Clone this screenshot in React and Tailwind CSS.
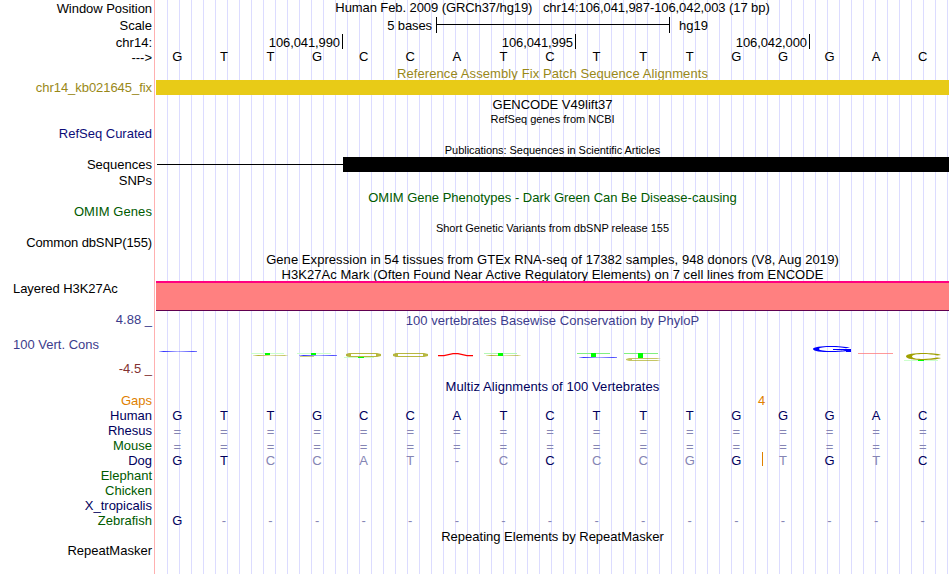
import React from "react";

const BASES = "GTTGCCATCTTTGGGAC";
const DOG = "GTCCAT-CCCCGGTGTC";

const alignments = [
  { name: "Human", seq: BASES, label: "text-[#00005c]" },
  { name: "Rhesus", seq: "=================", label: "text-[#00005c]", seqClass: "pt-px" },
  { name: "Mouse", seq: "=================", label: "text-[#005a00]", seqClass: "pt-px" },
  { name: "Dog", seq: DOG, label: "text-[#00005c]" },
  { name: "Elephant", seq: "", label: "text-[#005a00]" },
  { name: "Chicken", seq: "", label: "text-[#005a00]" },
  { name: "X_tropicalis", seq: "", label: "text-[#00005c]" },
  { name: "Zebrafish", seq: "G----------------", label: "text-[#005a00]" },
];

/* One line of the browser: label on the left, track on the right */
function Row({ label, h, labelClass = "", children }) {
  return (
    <div className={`flex ${h}`}>
      <div className={`w-[156px] shrink-0 pr-[4px] text-right ${labelClass}`}>
        {label}
      </div>
      <div className="w-[793px] shrink-0">{children}</div>
    </div>
  );
}

function Title({ className = "", children }) {
  return <p className={`text-center ${className}`}>{children}</p>;
}

function Sequence({ seq, compare, className = "" }) {
  return (
    <div className={`-ml-[2px] grid w-[792px] grid-cols-17 ${className}`}>
      {seq.split("").map((base, i) => (
        <span
          key={i}
          className={`text-center ${
            compare && base !== compare[i] ? "text-[#8585b4]" : ""
          }`}
        >
          {base}
        </span>
      ))}
    </div>
  );
}

/* Flattened base shapes of the conservation logo */
function ConservationLogo() {
  return (
    <svg width="793" height="20" viewBox="156 343 793 20" className="block">
      <defs>
        <linearGradient id="blueFade">
          <stop offset="0" stopColor="#0000ff" stopOpacity="0.2" />
          <stop offset="0.12" stopColor="#0000ff" stopOpacity="0.8" />
          <stop offset="0.5" stopColor="#0000ff" stopOpacity="0.3" />
          <stop offset="0.9" stopColor="#0000ff" stopOpacity="0.7" />
          <stop offset="1" stopColor="#0000ff" stopOpacity="0.5" />
        </linearGradient>
        <linearGradient id="oliveFade">
          <stop offset="0" stopColor="#a0a000" stopOpacity="0.2" />
          <stop offset="0.15" stopColor="#a0a000" stopOpacity="0.8" />
          <stop offset="0.5" stopColor="#a0a000" stopOpacity="0.3" />
          <stop offset="0.9" stopColor="#a0a000" stopOpacity="0.6" />
          <stop offset="1" stopColor="#a0a000" stopOpacity="0.1" />
        </linearGradient>
      </defs>

      <rect x="159" y="351" width="38" height="1" fill="url(#blueFade)" />

      <rect x="251" y="353" width="33" height="1" fill="#ccffcc" />
      <rect x="253" y="355" width="35" height="1" fill="url(#oliveFade)" />
      <rect x="265" y="353" width="5" height="2" fill="#00ff00" />

      <rect x="297" y="353" width="34" height="1" fill="#ccffcc" />
      <rect x="299" y="355" width="38" height="1" fill="url(#blueFade)" />
      <rect x="300" y="356" width="14" height="1" fill="#a0a000" fillOpacity="0.5" />
      <rect x="311" y="353" width="5" height="2" fill="#00ff00" />

      <path
        d="M349 353H377L381 354V355H376V354H351V356H376V355H381V356L377 357H349L346 356V354Z"
        fill="#a0a000"
        fillOpacity="0.75"
      />
      <rect x="344" y="357" width="30" height="1" fill="#ccffcc" />
      <rect x="358" y="357" width="6" height="1" fill="#00ff00" />

      <path
        d="M396 353H424L428 354V355H423V354H398V356H423V355H428V356L424 357H396L393 356V354Z"
        fill="#a0a000"
        fillOpacity="0.75"
      />

      <path
        d="M438 355.6H444L453 353.6H458L467 355.6H473"
        fill="none"
        stroke="#ff0000"
        strokeWidth="1.1"
      />

      <rect x="484" y="353" width="33" height="1" fill="#b4f8b4" />
      <rect x="486" y="355" width="35" height="1" fill="url(#oliveFade)" />
      <rect x="498" y="353" width="5" height="3" fill="#00ff00" />

      <rect x="577" y="353" width="33" height="1" fill="#80f080" />
      <rect x="579" y="357" width="38" height="1" fill="url(#blueFade)" />
      <rect x="591" y="353" width="5" height="4" fill="#00ff00" />

      <rect x="624" y="353" width="34" height="1" fill="#80f080" />
      <rect x="638" y="353" width="5" height="5" fill="#00ff00" />
      <path
        d="M629 358H657L661 359H632V360H661L657 361H629L626 360V359Z"
        fill="#a0a000"
        fillOpacity="0.6"
      />

      <path
        d="M850 347.6C840 345.2 813 345.2 813 349C813 352.9 838 352.4 846 351.2V352H851V349H833V350H845C840 351.4 819 351.6 819 349C819 346.4 838 346.6 846 348.2Z"
        fill="#0000ff"
      />

      <rect x="858" y="353" width="35" height="1" fill="#ff8080" fillOpacity="0.8" />

      <rect x="904" y="360" width="34" height="1" fill="#ccffcc" />
      <path
        d="M941 355C935 352.4 906 352 906 356.5C906 361 935 360.6 941 358L937 357.6C930 359.5 912 359.8 912 356.5C912 353.2 930 353.5 937 355.4Z"
        fill="#a0a000"
      />
      <rect x="918" y="360" width="6" height="1" fill="#00ff00" />
    </svg>
  );
}

export default function App() {
  return (
    <div className="h-[574px] w-[950px] overflow-hidden bg-white pr-px font-['Liberation_Sans',Arial,sans-serif] text-[13px] text-black whitespace-pre">
      <div className="h-full w-[949px] bg-[linear-gradient(#ffb0b0,#ffb0b0),repeating-linear-gradient(90deg,transparent_0px,transparent_11px,#dcdcff_11px,#dcdcff_12px)] bg-[size:1px_100%,793px_100%] bg-[position:154px_0,156px_0] bg-no-repeat">
        {/* Position, scale and ruler */}
        <Row label="Window Position" h="h-4 leading-[17px]" labelClass="tracking-[-0.05px]">
          <Title className="leading-[15px] tracking-[-0.085px]">
            Human Feb. 2009 (GRCh37/hg19)   chr14:106,041,987-106,042,003 (17 bp)
          </Title>
        </Row>
        <Row label="Scale" h="h-[18px] leading-[19px]">
          <div className="flex">
            <span className="w-[280px] pr-[4px] text-right tracking-[-0.1px]">5 bases</span>
            <span className="mt-px flex h-4 w-[234px] flex-col border-x border-black pt-[7px]">
              <span className="h-px bg-black" />
            </span>
            <span className="pl-[9px]">hg19</span>
          </div>
        </Row>
        <Row label="chr14:" h="h-4 leading-[17px]">
          <div className="flex h-[15px] text-right tracking-[-0.1px]">
            <span className="w-[187px] border-r border-black pr-[2px]">106,041,990</span>
            <span className="w-[233px] border-r border-black pr-[2px]">106,041,995</span>
            <span className="w-[234px] border-r border-black pr-[2px]">106,042,000</span>
          </div>
        </Row>
        <Row label="--->" h="h-[15px] leading-[15px]">
          <Sequence seq={BASES} className="leading-[13px]" />
        </Row>

        {/* Fix patches */}
        <Row h="h-[15px] leading-[17px]">
          <Title className="tracking-[0.1px] text-[#998818]">
            Reference Assembly Fix Patch Sequence Alignments
          </Title>
        </Row>
        <Row
          label="chr14_kb021645_fix"
          h="h-[15px] leading-[15px]"
          labelClass="tracking-[-0.05px] text-[#998818]"
        >
          <div className="h-full bg-[#e8cb17]" />
        </Row>

        {/* Genes and publications */}
        <Row h="h-[17px] leading-[19px]">
          <Title>GENCODE V49lift37</Title>
        </Row>
        <Row h="h-[14px] leading-[14px]">
          <Title className="text-[11px]">RefSeq genes from NCBI</Title>
        </Row>
        <Row
          label="RefSeq Curated"
          h="h-4 leading-[15px]"
          labelClass="text-[#0c0c78]"
        />
        <Row h="h-[15px] leading-4">
          <Title className="text-[11px] tracking-[-0.05px]">
            Publications: Sequences in Scientific Articles
          </Title>
        </Row>
        <Row label="Sequences" h="h-[15px] leading-[15px]">
          <div className="flex h-full items-center pl-px">
            <div className="h-px w-[186px] bg-black" />
            <div className="h-full flex-1 bg-black" />
          </div>
        </Row>
        <Row label="SNPs" h="h-4 leading-[17px]" />
        <Row h="h-[17px] leading-[19px]">
          <Title className="text-[#005a00]">
            OMIM Gene Phenotypes - Dark Green Can Be Disease-causing
          </Title>
        </Row>
        <Row
          label="OMIM Genes"
          h="h-[14px] leading-[14px]"
          labelClass="tracking-[0.08px] text-[#005a00]"
        />
        <Row h="h-[17px] leading-[18px]">
          <Title className="text-[11px]">
            Short Genetic Variants from dbSNP release 155
          </Title>
        </Row>
        <Row
          label="Common dbSNP(155)"
          h="h-[14px] leading-[14px]"
          labelClass="tracking-[-0.12px]"
        />

        {/* Expression and regulation */}
        <Row h="h-[17px] leading-[19px]">
          <Title className="tracking-[0.06px]">
            Gene Expression in 54 tissues from GTEx RNA-seq of 17382 samples, 948 donors (V8, Aug 2019)
          </Title>
        </Row>
        <Row h="h-[14px] leading-[15px]">
          <Title className="tracking-[0.05px]">
            H3K27Ac Mark (Often Found Near Active Regulatory Elements) on 7 cell lines from ENCODE
          </Title>
        </Row>
        <Row
          label={<span className="block text-left">Layered H3K27Ac</span>}
          h="h-[30px] leading-[15px]"
          labelClass="pl-[13px] tracking-[-0.05px]"
        >
          <div className="h-full border-t-2 border-b border-t-[#ff0080] border-b-[#600050] bg-[#ff8080]" />
        </Row>

        {/* Conservation */}
        <Row
          h="h-[67px] leading-[18px]"
          labelClass="pl-[13px] text-[#3c3c8c]"
          label={
            <div className="flex h-full flex-col justify-between">
              <span>4.88 _</span>
              <span className="text-left">100 Vert. Cons</span>
              <span className="text-[#823232]">-4.5 _</span>
            </div>
          }
        >
          <Title className="h-8 pt-px tracking-[0.03px] text-[#3c3c8c]">
            100 vertebrates Basewise Conservation by PhyloP
          </Title>
          <ConservationLogo />
        </Row>

        {/* Alignments */}
        <Row h="h-4 leading-[17px]">
          <Title className="tracking-[0.08px] text-[#00005c]">
            Multiz Alignments of 100 Vertebrates
          </Title>
        </Row>
        <Row
          label="Gaps"
          h="h-[14px] leading-[14px]"
          labelClass="text-[#e08000]"
        >
          <span className="block pl-[602px] text-[#e08000]">4</span>
        </Row>
        {alignments.map((row) => (
          <Row
            key={row.name}
            label={row.name}
            h="h-[15px] leading-[15px]"
            labelClass={row.label}
          >
            <div className="relative text-[#00005c]">
              <Sequence seq={row.seq} compare={BASES} className={row.seqClass} />
              {row.name === "Dog" && (
                <span className="absolute top-[-1px] left-[606px] h-[14px] w-px bg-[#e08000]" />
              )}
            </div>
          </Row>
        ))}

        {/* Repeats */}
        <Row h="h-4 leading-[17px]">
          <Title>Repeating Elements by RepeatMasker</Title>
        </Row>
        <Row label="RepeatMasker" h="h-[15px] leading-[14px]" />
      </div>
    </div>
  );
}
